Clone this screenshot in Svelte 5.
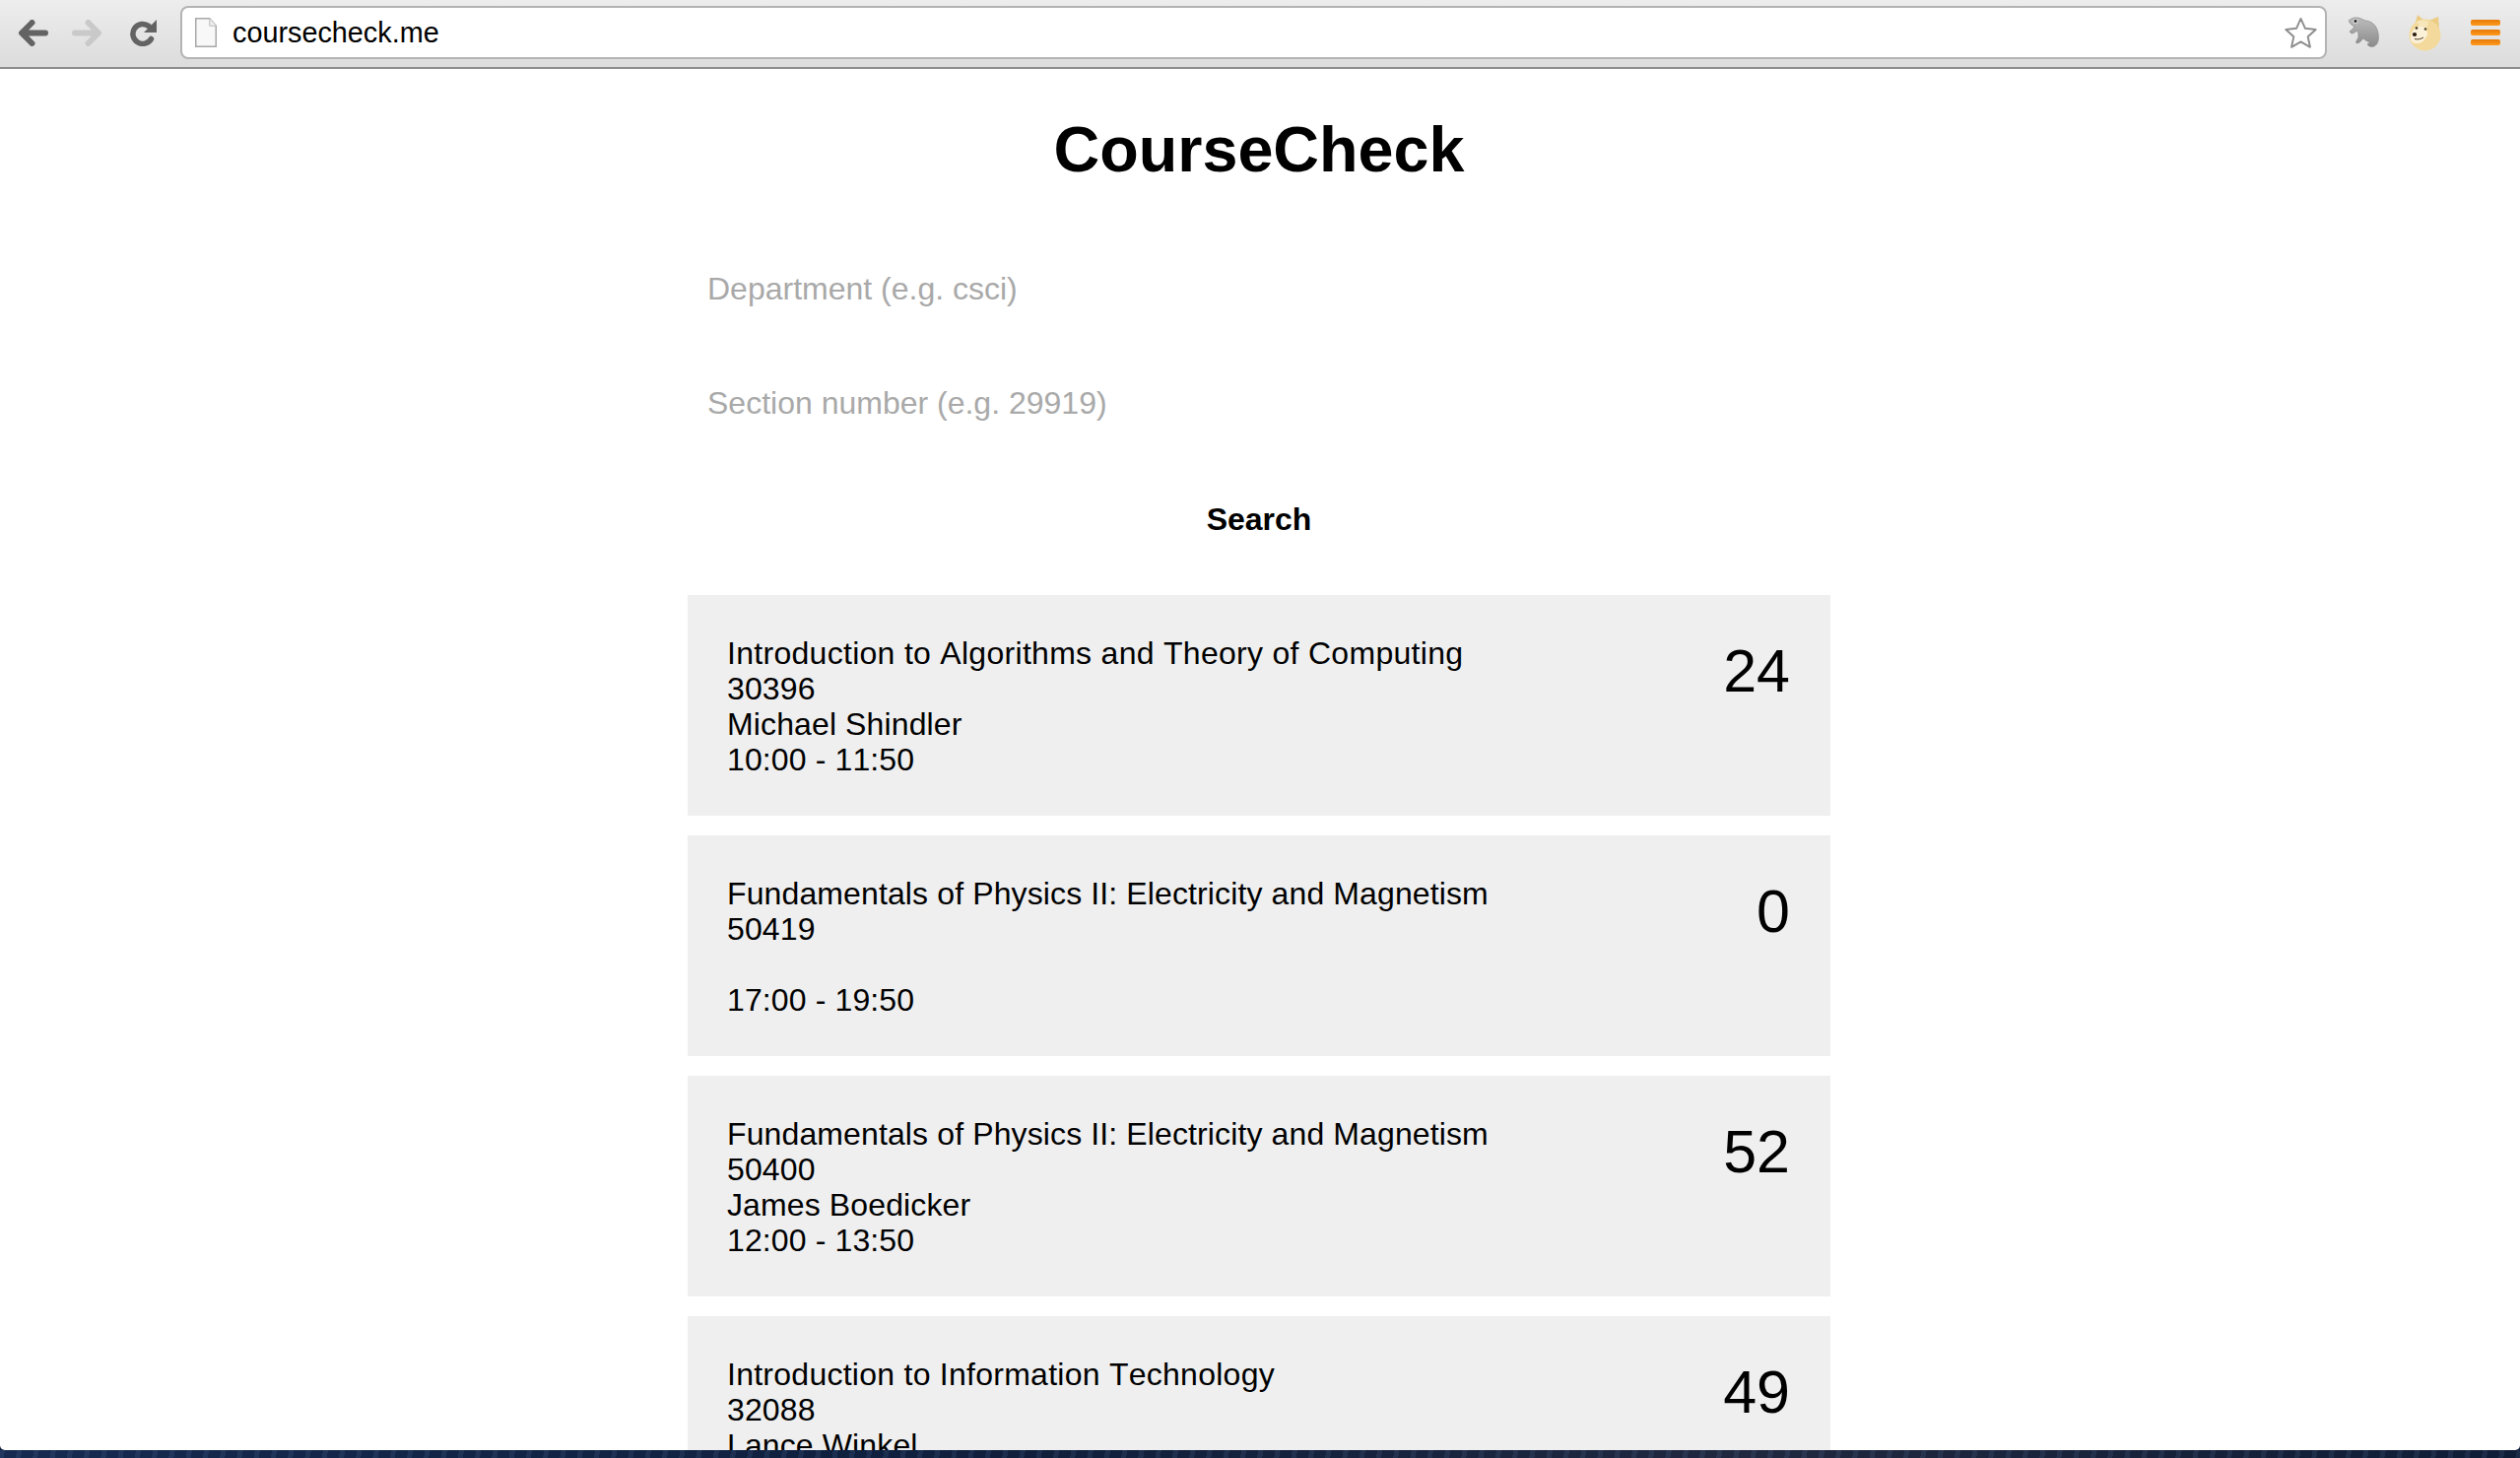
<script>
	const courses = [
		{ name: 'Introduction to Algorithms and Theory of Computing', track: 0.29, section: '30396', prof: 'Michael Shindler', time: '10:00 - 11:50', seats: 24 },
		{ name: 'Fundamentals of Physics II: Electricity and Magnetism', track: 0.12, section: '50419', prof: '', time: '17:00 - 19:50', seats: 0 },
		{ name: 'Fundamentals of Physics II: Electricity and Magnetism', track: 0.12, section: '50400', prof: 'James Boedicker', time: '12:00 - 13:50', seats: 52 },
		{ name: 'Introduction to Information Technology', track: 0.26, section: '32088', prof: 'Lance Winkel', time: '', seats: 49 },
	];
</script>

<div class="window">
	<header class="toolbar">
		<div class="nav">
			<!-- back -->
			<svg width="31" height="27" viewBox="0 0 31 27" aria-hidden="true">
				<path d="M28 13.500H6M14.500 3L4 13.500 14.500 24" fill="none" stroke="#636363" stroke-width="6" stroke-linecap="round" stroke-linejoin="round" />
			</svg>
			<!-- forward -->
			<svg width="31" height="27" viewBox="0 0 31 27" aria-hidden="true">
				<path d="M3 13.500h22M16.500 3L27 13.500 16.500 24" fill="none" stroke="#c9c9c9" stroke-width="6" stroke-linecap="round" stroke-linejoin="round" />
			</svg>
			<!-- reload -->
			<svg class="reload" width="27" height="27" viewBox="0 0 27 27" aria-hidden="true">
				<path d="M21.500 19.500A10 10 0 1 1 19 6.500" fill="none" stroke="#636363" stroke-width="5.500" stroke-linecap="round" />
				<path d="M27 0v13H14z" fill="#636363" />
			</svg>
		</div>

		<div class="omnibox">
			<svg width="22" height="30" viewBox="0 0 22 30" aria-hidden="true">
				<path d="M.75.75h14l6.500 7.500v21H.75z" fill="#f8f8f8" stroke="#a8a8a8" stroke-width="1.500" />
				<path d="M14.750.75v7.500h6.500" fill="#eee" stroke="#bbb" stroke-width="1" />
			</svg>
			<span class="url">coursecheck.me</span>
			<svg width="35" height="35" viewBox="0 0 36 36" aria-hidden="true">
				<path d="M18 3l4.600 10.200 11 1.200-8.200 7.400 2.300 10.900L18 27.200 8.300 32.700l2.300-10.900L2.400 14.400l11-1.200z" fill="#fff" stroke="#8e8e8e" stroke-width="2" stroke-linejoin="round" />
			</svg>
		</div>

		<div class="extensions">
			<!-- chameleon -->
			<svg width="31" height="32" viewBox="0 0 31 32" aria-hidden="true">
				<defs>
					<linearGradient id="cham" x1="0" y1="0" x2="0" y2="1">
						<stop offset="0" stop-color="#bcbcbc" />
						<stop offset="1" stop-color="#8b8b8b" />
					</linearGradient>
				</defs>
				<path d="M0 4C2 2 5 .5 9 1c3 0 5 2 8 3 6 0 12 5 13 13 1 6 0 11-4 13-3 1-6 0-7-2l3-2c-3-1-5-2-7-4-2 1-2 3-4 4l-3 1c-1-2 1-4 2-6 0-3 0-5-1-7-2 1-4 3-6 3l-2-2c2-2 4-3 5-5-2-1-5-3-6-6z" fill="url(#cham)" stroke="#888" stroke-width=".7" />
				<circle cx="7" cy="4.500" r="2.600" fill="#d4d4d4" />
				<circle cx="7" cy="4.500" r="1.400" fill="#222" />
			</svg>
			<!-- doge -->
			<svg width="33" height="38" viewBox="0 0 33 38" aria-hidden="true">
				<path d="M6 12L9 1l7 6 7-1 7-3 1 13z" fill="#eccb82" />
				<circle cx="16.500" cy="21.500" r="16" fill="#f3da9c" />
				<path d="M8 8c3-2 8-2 12 0l-2 7-5 1z" fill="#f7e6ba" />
				<path d="M2 25c0-6 3-11 8-12 5-1 9 3 9 7 0 3-2 4-3 6-2 3-5 4-8 4-3 0-6-2-6-5z" fill="#fbf1d8" />
				<circle cx="8" cy="14.500" r="1.300" fill="#3a3020" />
				<circle cx="17" cy="15.500" r="1.300" fill="#4a4030" />
				<ellipse cx="6" cy="21" rx="2.200" ry="1.900" fill="#2a2015" />
				<path d="M6 25.500c3 .8 6 .4 9-1.500" fill="none" stroke="#4a3c24" stroke-width="1" />
			</svg>
			<div class="menu" aria-hidden="true">
				<span></span>
				<span></span>
				<span></span>
			</div>
		</div>
	</header>

	<main class="page">
		<h1>CourseCheck</h1>
		<form class="search" onsubmit={(e) => e.preventDefault()}>
			<input type="text" placeholder="Department (e.g. csci)" />
			<input type="text" placeholder="Section number (e.g. 29919)" />
			<button type="submit">Search</button>
		</form>

		<ul class="results">
			{#each courses as course}
				<li class="card">
					<div class="info">
						<div class="line" style="letter-spacing: {course.track}px">{course.name}</div>
						<div class="line">{course.section}</div>
						<div class="line">{course.prof}</div>
						<div class="line">{course.time}</div>
					</div>
					<div class="seats">{course.seats}</div>
				</li>
			{/each}
		</ul>
	</main>

	<div class="wallpaper"></div>
</div>

<style>
	:global(body) {
		background: #fff;
		font-family: "Liberation Sans", Arial, sans-serif;
		font-kerning: none;
		color: #000;
	}

	.window {
		display: flex;
		flex-direction: column;
		height: 1480px;
		overflow: hidden;
		background: #10203a;
	}

	/* ===== Toolbar ===== */
	.toolbar {
		display: flex;
		align-items: center;
		box-sizing: border-box;
		height: 70px;
		flex-shrink: 0;
		padding-bottom: 2px;
		background: linear-gradient(#ededed, #dcdcdc);
		border-bottom: 2px solid #8c8c8c;
	}

	.nav {
		display: flex;
		align-items: center;
		gap: 24px;
		width: 183px;
		flex-shrink: 0;
		padding-left: 18px;
		box-sizing: border-box;
	}

	.reload {
		margin-left: 4px;
	}

	.omnibox {
		display: flex;
		align-items: center;
		box-sizing: border-box;
		width: 2179px;
		height: 54px;
		padding: 0 7px 0 13px;
		background: #fff;
		border: 2px solid #b4b4b4;
		border-radius: 8px;
	}

	.url {
		flex: 1;
		margin-left: 16px;
		font-size: 28.8px;
		color: #000;
	}

	.extensions {
		display: flex;
		align-items: center;
		gap: 30px;
		padding-left: 22px;
	}

	.menu {
		display: flex;
		flex-direction: column;
		gap: 4px;
	}

	.menu span {
		display: block;
		width: 30px;
		height: 6px;
		background: linear-gradient(#e67a08, #ff9a1c);
		border-radius: 2px;
	}

	/* ===== Page ===== */
	.page {
		flex: 1;
		min-height: 0;
		overflow: hidden;
		display: flex;
		flex-direction: column;
		align-items: center;
		padding-right: 2px;
		background: #fff;
		border-radius: 0 0 5px 5px;
	}

	h1 {
		margin: 45px 0 46px;
		font-size: 64.7px;
		line-height: 74px;
		font-weight: 700;
		text-align: center;
	}

	.search {
		display: flex;
		flex-direction: column;
		width: 1160px;
		margin-bottom: 17px;
	}

	input {
		box-sizing: border-box;
		height: 116px;
		padding: 0 20px;
		border: 0;
		outline: 0;
		background: transparent;
		font: 32px "Liberation Sans", Arial, sans-serif;
		font-kerning: none;
	}

	input::placeholder {
		color: #a9a9a9;
		opacity: 1;
	}

	button {
		height: 120px;
		padding: 0;
		border: 0;
		background: transparent;
		font: 700 32px "Liberation Sans", Arial, sans-serif;
		color: #000;
	}

	.results {
		display: flex;
		flex-direction: column;
		gap: 20px;
		width: 1160px;
		margin: 0;
		padding: 0;
		list-style: none;
	}

	.card {
		display: flex;
		justify-content: space-between;
		align-items: flex-start;
		padding: 41px 41px 39px 40px;
		background: #efefef;
	}

	.line {
		height: 36px;
		font-size: 32px;
		line-height: 36px;
		letter-spacing: 0.12px;
	}

	.seats {
		font-size: 61px;
		line-height: 72px;
	}

	.wallpaper {
		height: 8px;
		flex-shrink: 0;
		background:
			repeating-linear-gradient(100deg, rgba(120, 150, 200, 0.12) 0 5px, transparent 5px 17px),
			linear-gradient(90deg, #162a50, #0f1f3c 40%, #20283f 70%, #0f1d36);
	}
</style>
